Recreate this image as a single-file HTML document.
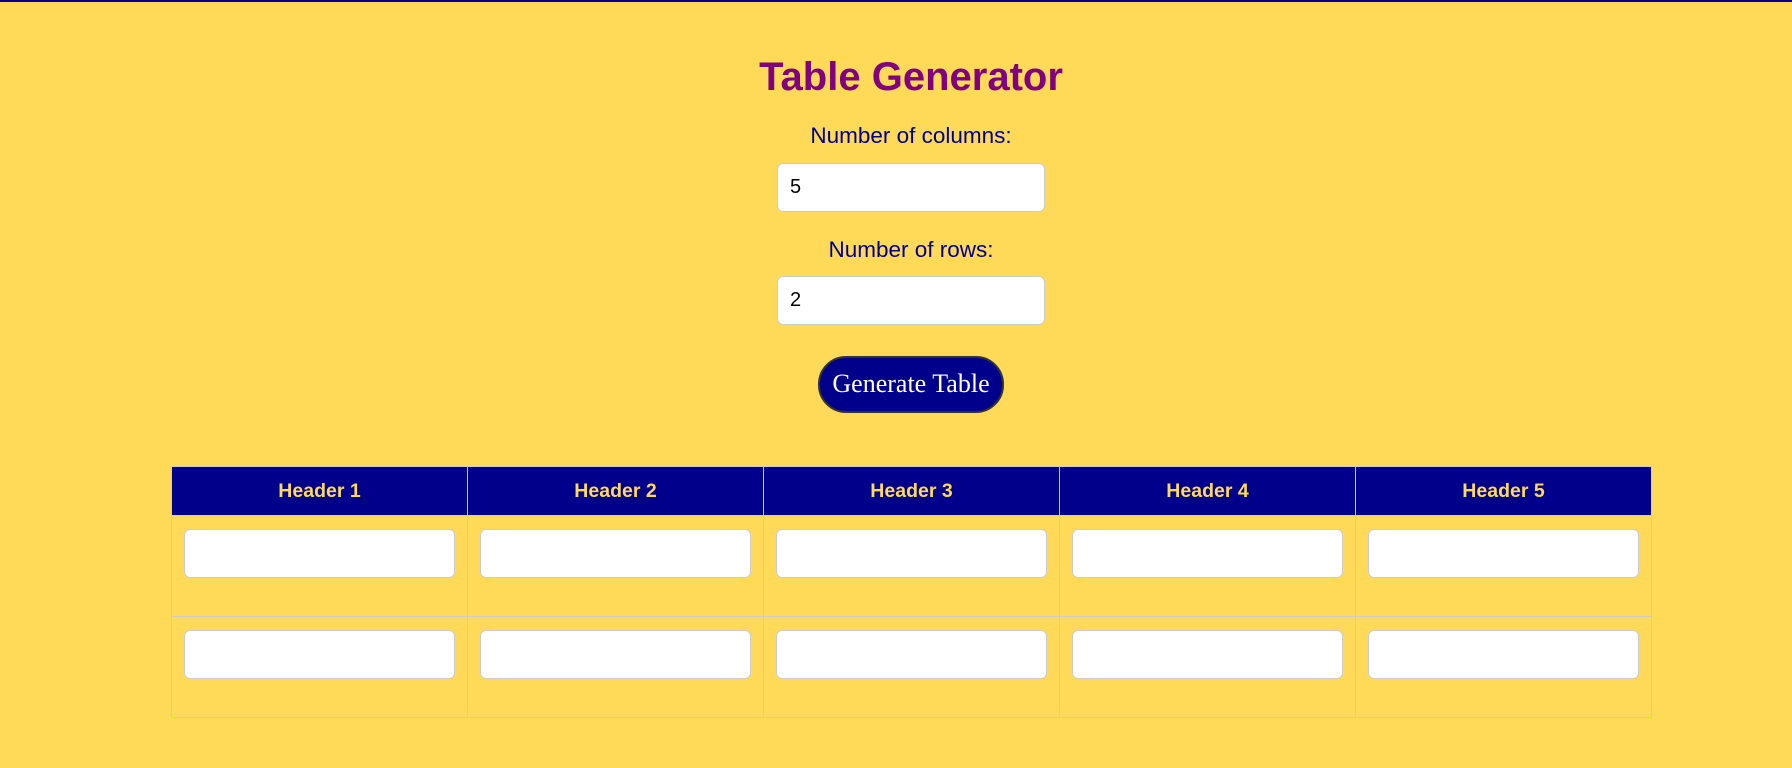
<!DOCTYPE html>
<html><head><meta charset="utf-8"><style>
*{box-sizing:border-box}
html,body{margin:0;height:768px;overflow:hidden}
body{background:#FFDA58;border-top:2px solid #00008B;font-family:"Liberation Sans",Arial,sans-serif;position:relative;width:1792px}
h1{position:absolute;left:15px;width:1792px;top:51px;margin:0;text-align:center;color:#800080;font-size:40px;font-weight:bold;line-height:48px}
.lbl{position:absolute;left:15px;width:1792px;text-align:center;color:#00008B;font-size:22.5px;line-height:26px;margin:0}
.inp{position:absolute;left:777px;width:268px;height:49px;background:#fff;border:1px solid #ccc;border-radius:6px;font-size:20px;line-height:47px;padding-left:12px;color:#000}
.btn{position:absolute;left:818px;top:354px;width:186px;height:57px;background:#00008B;border:2px solid #333;border-radius:28px;color:#fff;font-family:"Liberation Serif",serif;font-size:26px;text-align:center;line-height:52px}
table{position:absolute;left:171px;top:464px;width:1481px;border-collapse:collapse;table-layout:fixed}
th,td{border:1px solid #ccc;padding:0}
th{background:#00008B;color:#FFDA58;font-size:19.5px;height:49px;font-weight:bold}
td{height:101px;vertical-align:top;padding:13px 12px 0 12px}
td div{height:49px;background:#fff;border:1px solid #ccc;border-radius:6px}
</style></head><body>
<h1>Table Generator</h1>
<p class="lbl" style="top:121px">Number of columns:</p>
<div class="inp" style="top:161px">5</div>
<p class="lbl" style="top:235px">Number of rows:</p>
<div class="inp" style="top:274px">2</div>
<div class="btn">Generate Table</div>
<table>
<tr><th>Header 1</th><th>Header 2</th><th>Header 3</th><th>Header 4</th><th>Header 5</th></tr>
<tr><td><div></div></td><td><div></div></td><td><div></div></td><td><div></div></td><td><div></div></td></tr>
<tr><td><div></div></td><td><div></div></td><td><div></div></td><td><div></div></td><td><div></div></td></tr>
</table>
</body></html>
